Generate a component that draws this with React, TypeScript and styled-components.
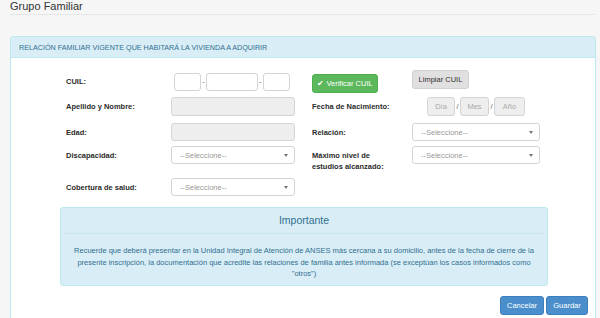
import React from "react";
import styled, { createGlobalStyle } from "styled-components";

const Global = createGlobalStyle`
  html, body { margin: 0; padding: 0; background: #f6f6f6; }
  body { font-family: "Liberation Sans", Arial, sans-serif; color: #333; }
  * { box-sizing: border-box; }
`;

const Page = styled.div`
  width: 600px;
  height: 318px;
  overflow: hidden;
  padding: 0 4px 0 10px;
`;

const Title = styled.h3`
  margin: 0;
  font-weight: normal;
  font-size: 11px;
  line-height: 13px;
  padding-top: 0;
  height: 15px;
  border-bottom: 1px solid #e6e6e6;
  color: #333;
`;

const Panel = styled.div`
  margin-top: 21px;
  border: 1px solid #bce8f1;
  border-radius: 3px;
  background: #fff;
  height: 300px;
`;

const PanelHeading = styled.div`
  height: 21px;
  background: #d9edf7;
  border-bottom: 1px solid #bce8f1;
  color: #31708f;
  font-size: 7.2px;
  text-transform: uppercase;
  padding-left: 8px;
  display: flex;
  align-items: center;
`;

const PanelBody = styled.div`
  padding: 0 7px 0 0;
`;

const Row = styled.div<{ $mt: number; $h: number; $align?: string }>`
  display: grid;
  grid-template-columns: 105px 124px 17px 100px 128px;
  margin-left: 55px;
  margin-top: ${(p) => p.$mt}px;
  height: ${(p) => p.$h}px;
  align-items: ${(p) => p.$align || "center"};
`;

const Label = styled.label<{ $col?: number }>`
  grid-column: ${(p) => p.$col || 1};
  font-weight: bold;
  font-size: 7.5px;
  line-height: 11px;
  color: #2b2b2b;
`;

const Field = styled.div<{ $col?: number }>`
  grid-column: ${(p) => p.$col || 2};
  display: flex;
  align-items: center;
`;

const Box = styled.div<{ $w: number; $disabled?: boolean; $h?: number }>`
  width: ${(p) => p.$w}px;
  height: ${(p) => p.$h || 18}px;
  border: 1px solid #d4d4d4;
  border-radius: 3px;
  background: ${(p) => (p.$disabled ? "#eee" : "#fff")};
  color: #aaa;
  font-size: 7.5px;
  display: flex;
  align-items: center;
  justify-content: center;
`;

const Sep = styled.span`
  font-size: 7px;
  color: #555;
  width: 5px;
  text-align: center;
`;

const Select = styled.div<{ $w: number }>`
  width: ${(p) => p.$w}px;
  height: 18px;
  border: 1px solid #d4d4d4;
  border-radius: 3px;
  background: #fff;
  color: #999;
  font-size: 7.5px;
  display: flex;
  align-items: center;
  justify-content: space-between;
  padding: 0 6px 0 8px;
`;

const Caret = styled.span`
  width: 0;
  height: 0;
  border-left: 2px solid transparent;
  border-right: 2px solid transparent;
  border-top: 3px solid #777;
`;

const Btn = styled.button<{ $variant: "success" | "default" | "primary"; $w: number; $mt?: number }>`
  width: ${(p) => p.$w}px;
  height: 19px;
  margin-top: ${(p) => p.$mt || 0}px;
  padding: 0;
  border-radius: 3px;
  font-family: "Liberation Sans", Arial, sans-serif;
  font-size: 7.5px;
  cursor: pointer;
  border: 1px solid
    ${(p) => (p.$variant === "success" ? "#4cae4c" : p.$variant === "primary" ? "#3a80be" : "#d0d0d0")};
  background: ${(p) => (p.$variant === "success" ? "#5cb85c" : p.$variant === "primary" ? "#4a8fcc" : "#e0e0e0")};
  color: ${(p) => (p.$variant === "default" ? "#333" : "#fff")};
`;

const Alert = styled.div`
  margin: 11px 0 0 49px;
  width: 488px;
  height: 79px;
  background: #d9edf7;
  border: 1px solid #bce8f1;
  border-radius: 3px;
  color: #31708f;
  text-align: center;
  padding: 0 10px;
`;

const AlertTitle = styled.div`
  font-size: 10.5px;
  line-height: 12px;
  padding-top: 6px;
  padding-bottom: 7px;
  border-bottom: 1px solid #c6e4f1;
  margin: 0 -6px;
`;

const AlertText = styled.p`
  margin: 11px 0 0;
  font-size: 7.5px;
  line-height: 11.5px;
`;

const Actions = styled.div`
  display: flex;
  justify-content: flex-end;
  gap: 2px;
  margin-top: 10px;
`;

export default function App() {
  return (
    <Page>
      <Global />
      <Title>Grupo Familiar</Title>
      <Panel>
        <PanelHeading>Relación familiar vigente que habitará la vivienda a adquirir</PanelHeading>
        <PanelBody>
          <Row $mt={12} $h={22}>
            <Label>CUIL:</Label>
            <Field>
              <Box $w={27} style={{ marginLeft: 3 }} />
              <Sep>-</Sep>
              <Box $w={52} />
              <Sep>-</Sep>
              <Box $w={27} />
            </Field>
            <Field $col={4}>
              <Btn $variant="success" $w={66} $mt={4}>✔ Verificar CUIL</Btn>
            </Field>
            <Field $col={5}>
              <Btn $variant="default" $w={57} $mt={-4}>Limpiar CUIL</Btn>
            </Field>
          </Row>
          <Row $mt={5} $h={19}>
            <Label>Apellido y Nombre:</Label>
            <Field>
              <Box $w={124} $h={19} $disabled />
            </Field>
            <Label $col={4}>Fecha de Nacimiento:</Label>
            <Field $col={5}>
              <Box $w={28} $h={19} $disabled style={{ marginLeft: 15 }}>Día</Box>
              <Sep>/</Sep>
              <Box $w={29} $h={19} $disabled>Mes</Box>
              <Sep>/</Sep>
              <Box $w={31} $h={19} $disabled>Año</Box>
            </Field>
          </Row>
          <Row $mt={7} $h={18}>
            <Label>Edad:</Label>
            <Field>
              <Box $w={124} $disabled />
            </Field>
            <Label $col={4}>Relación:</Label>
            <Field $col={5}>
              <Select $w={128}>--Seleccione--<Caret /></Select>
            </Field>
          </Row>
          <Row $mt={5} $h={24} $align="start">
            <Label style={{ marginTop: 4 }}>Discapacidad:</Label>
            <Field>
              <Select $w={125}>--Seleccione--<Caret /></Select>
            </Field>
            <Label $col={4} style={{ marginTop: 4 }}>Máximo nivel de<br />estudios alcanzado:</Label>
            <Field $col={5}>
              <Select $w={128}>--Seleccione--<Caret /></Select>
            </Field>
          </Row>
          <Row $mt={8} $h={18}>
            <Label>Cobertura de salud:</Label>
            <Field>
              <Select $w={125}>--Seleccione--<Caret /></Select>
            </Field>
          </Row>
          <Alert>
            <AlertTitle>Importante</AlertTitle>
            <AlertText>
              Recuerde que deberá presentar en la Unidad Integral de Atención de ANSES más cercana a su domicilio, antes de la fecha de cierre de la presente inscripción, la documentación que acredite las relaciones de familia antes informada (se exceptúan los casos informados como "otros")
            </AlertText>
          </Alert>
          <Actions>
            <Btn $variant="primary" $w={44}>Cancelar</Btn>
            <Btn $variant="primary" $w={42}>Guardar</Btn>
          </Actions>
        </PanelBody>
      </Panel>
    </Page>
  );
}
